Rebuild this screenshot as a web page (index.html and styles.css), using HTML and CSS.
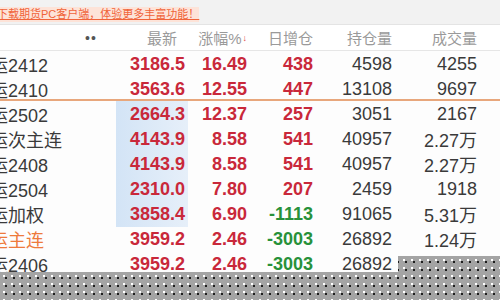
FILE: index.html
```html
<!DOCTYPE html>
<html lang="zh-CN">
<head>
    <meta charset="UTF-8">
    <meta name="viewport" content="width=device-width, initial-scale=1.0">
    <title>期货行情</title>
    <link rel="stylesheet" href="styles.css">
</head>
<body>
    <!-- Promo Banner -->
    <div class="promo-bar">
        <a class="promo-link">下载期货PC客户端，体验更多丰富功能！</a>
    </div>

    <!-- Column Header -->
    <div class="quote-row quote-head">
        <div class="cell name-cell"><span class="dots">••</span></div>
        <div class="cell latest-head">最新</div>
        <div class="cell">涨幅%<span class="sort-arrow">↓</span></div>
        <div class="cell">日增仓</div>
        <div class="cell">持仓量</div>
        <div class="cell">成交量</div>
    </div>

    <!-- Quote List -->
    <div class="quote-list">
        <div class="quote-row">
            <div class="cell name-cell"><span class="name">集运2412</span></div>
            <div class="cell up">3186.5</div>
            <div class="cell up">16.49</div>
            <div class="cell up">438</div>
            <div class="cell">4598</div>
            <div class="cell">4255</div>
        </div>
        <div class="quote-row main-split">
            <div class="cell name-cell"><span class="name">集运2410</span></div>
            <div class="cell up">3563.6</div>
            <div class="cell up">12.55</div>
            <div class="cell up">447</div>
            <div class="cell">13108</div>
            <div class="cell">9697</div>
        </div>
        <div class="quote-row">
            <div class="cell name-cell"><span class="name">集运2502</span></div>
            <div class="cell up flash">2664.3</div>
            <div class="cell up">12.37</div>
            <div class="cell up">257</div>
            <div class="cell">3051</div>
            <div class="cell">2167</div>
        </div>
        <div class="quote-row">
            <div class="cell name-cell"><span class="name">集运次主连</span></div>
            <div class="cell up flash">4143.9</div>
            <div class="cell up">8.58</div>
            <div class="cell up">541</div>
            <div class="cell">40957</div>
            <div class="cell">2.27万</div>
        </div>
        <div class="quote-row">
            <div class="cell name-cell"><span class="name">集运2408</span></div>
            <div class="cell up flash">4143.9</div>
            <div class="cell up">8.58</div>
            <div class="cell up">541</div>
            <div class="cell">40957</div>
            <div class="cell">2.27万</div>
        </div>
        <div class="quote-row">
            <div class="cell name-cell"><span class="name">集运2504</span></div>
            <div class="cell up flash">2310.0</div>
            <div class="cell up">7.80</div>
            <div class="cell up">207</div>
            <div class="cell">2459</div>
            <div class="cell">1918</div>
        </div>
        <div class="quote-row">
            <div class="cell name-cell"><span class="name">集运加权</span></div>
            <div class="cell up flash">3858.4</div>
            <div class="cell up">6.90</div>
            <div class="cell down">-1113</div>
            <div class="cell">91065</div>
            <div class="cell">5.31万</div>
        </div>
        <div class="quote-row">
            <div class="cell name-cell"><span class="name main-contract">集运主连</span></div>
            <div class="cell up">3959.2</div>
            <div class="cell up">2.46</div>
            <div class="cell down">-3003</div>
            <div class="cell">26892</div>
            <div class="cell">1.24万</div>
        </div>
        <div class="quote-row">
            <div class="cell name-cell"><span class="name">集运2406</span></div>
            <div class="cell up">3959.2</div>
            <div class="cell up">2.46</div>
            <div class="cell down">-3003</div>
            <div class="cell">26892</div>
            <div class="cell"></div>
        </div>
    </div>

    <!-- Loading mask over the bottom of the list -->
    <div class="mask"></div>
</body>
</html>
```

FILE: styles.css
```css
/* Basic Styling */
body {
    margin: 0;
    width: 500px;
    height: 300px;
    overflow: hidden;
    position: relative;
    background-color: #fdfdfd;
    font-family: "Liberation Sans", "Noto Sans CJK SC", sans-serif;
    color: #3a3a3a;
}
/* Promo Banner */
.promo-bar {
    height: 24px;
    background-color: #f2f2f2;
    border-bottom: 1px solid #e4e4e4;
    display: flex;
    align-items: flex-end;
    overflow: hidden;
}
.promo-link {
    margin-left: -3px;
    margin-bottom: 2px;
    padding: 1px 0;
    font-size: 11px;
    line-height: 13px;
    color: #f0643a;
    background-color: #fde3d8;
    text-decoration: underline;
}
/* Rows */
.quote-row {
    display: grid;
    grid-template-columns: 116px 72px 62px 66px 79px 85px 1fr;
    height: 25px;
    align-items: stretch;
    font-size: 18px;
}
.cell {
    display: flex;
    align-items: center;
    justify-content: flex-end;
    padding-right: 3px;
    white-space: nowrap;
}
.name-cell {
    justify-content: flex-start;
    padding-right: 0;
    overflow: visible;
}
.name {
    margin-left: -28px;
    color: #3a3a3a;
}
.name.main-contract { color: #ee7a3c; }
/* Header */
.quote-head {
    font-size: 15px;
    color: #9a9a9a;
    background-color: #fff;
    border-bottom: 1px solid #e6e6e6;
}
.quote-head .latest-head { padding-right: 11px; }
.dots {
    margin-left: 85px;
    font-size: 14px;
    letter-spacing: 1px;
    color: #555;
}
.sort-arrow {
    font-size: 9px;
    color: #e03a3a;
    margin-left: 1px;
}
/* Price colours */
.up { color: #c9283a; font-weight: bold; }
.down { color: #27913a; font-weight: bold; }
.flash {
    background: linear-gradient(to right, #d3e4f6, #e6eff9);
}
.main-split {
    height: 23px;
    border-bottom: 2px solid #e8a77c;
}
/* Mask */
.mask {
    position: absolute;
    left: 0;
    top: 256px;
    width: 500px;
    height: 44px;
    clip-path: polygon(0 16px, 398px 16px, 398px 0, 500px 0, 500px 44px, 0 44px);
    background-color: #a4a4a4;
    background-image:
        radial-gradient(circle, #fff 0.9px, transparent 1.3px),
        radial-gradient(circle, #1e1e1e 0.9px, transparent 1.3px);
    background-size: 8px 8px;
    background-position: 0 0, 2px 2px;
}
```
